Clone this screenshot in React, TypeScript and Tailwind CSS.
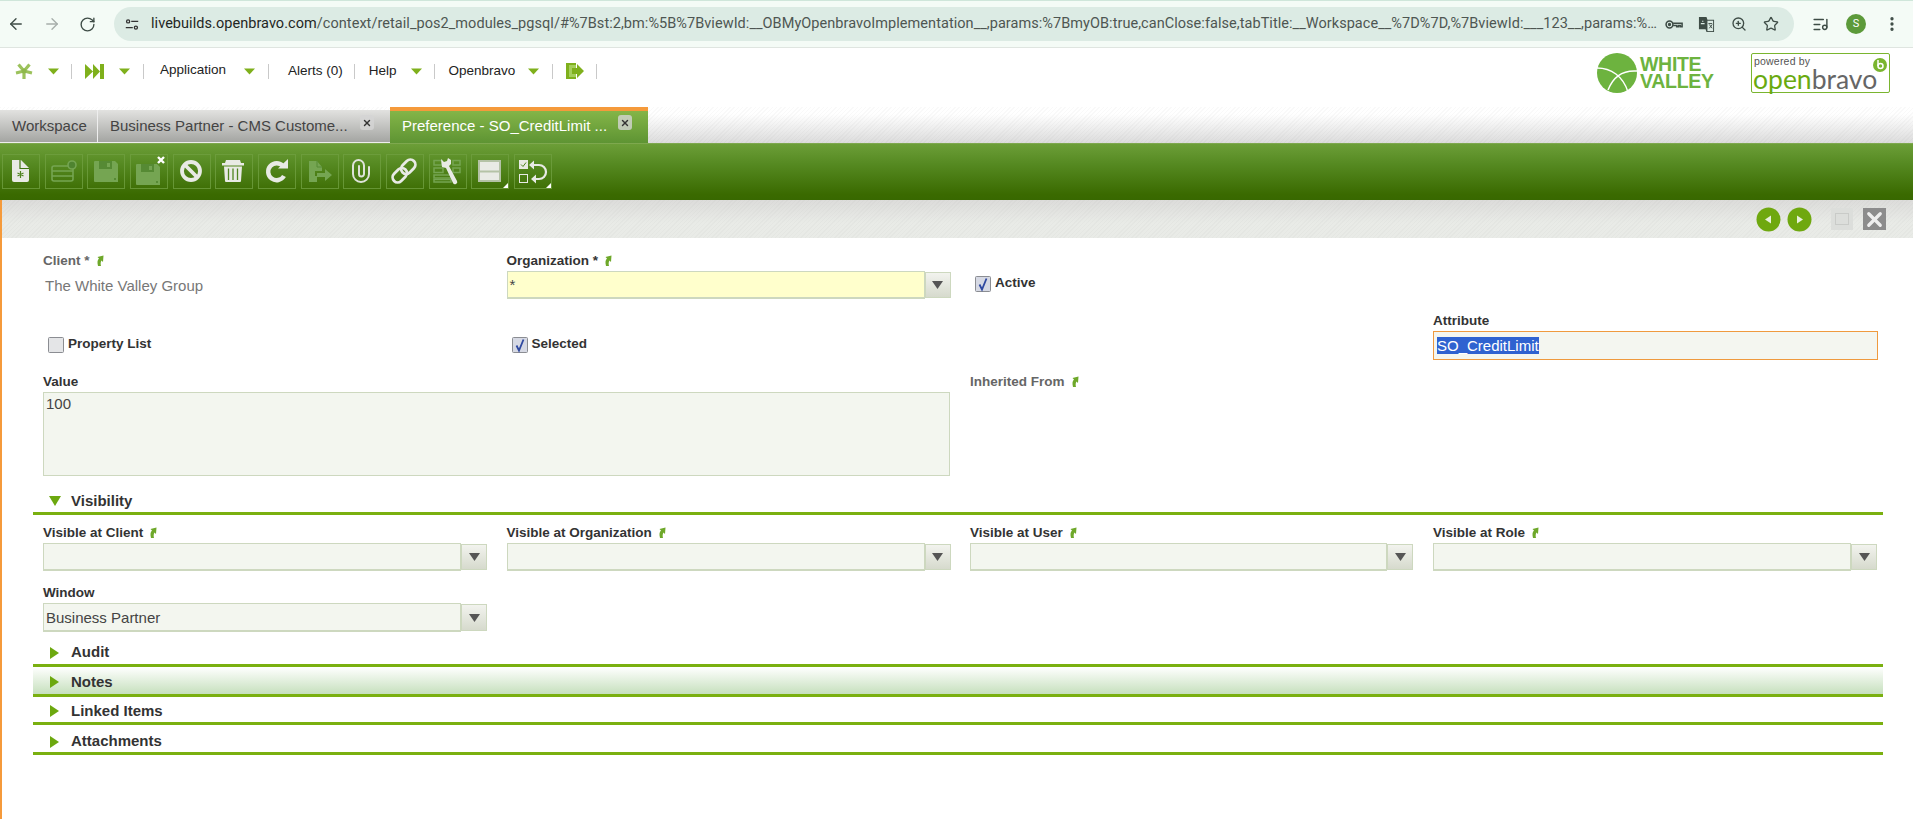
import React from "react";
import { ArrowLeft, ArrowRight, RotateCw, ZoomIn, Star, ListMusic, MoreVertical, X } from "lucide-react";

const W = "#e8eae5";
const D = "#75a552";

function Btn({ children, corner }: { children: React.ReactNode; corner?: boolean }) {
  return (
    <div className="relative w-[38px] h-[35px] border border-[#6f9f40]/80">
      <svg viewBox="1 1 36 33" className="w-[36px] h-[33px] block">{children}</svg>
      {corner && <span className="absolute right-0 bottom-0 w-0 h-0 border-l-[5px] border-l-transparent border-b-[5px] border-b-white" />}
    </div>
  );
}

function Floppy() {
  return (
    <>
      <path d="M8 7h20l3 3v18H8a1 1 0 0 1-1-1V8a1 1 0 0 1 1-1z" fill={D} />
      <rect x="12" y="7" width="13" height="8" fill="#568a34" />
      <rect x="20" y="9" width="3" height="4" fill={D} />
      <rect x="27" y="24" width="2" height="2" fill="#568a34" />
    </>
  );
}

function Toolbar() {
  return (
    <div className="h-[57px] flex gap-[4.67px] pl-[2px] pt-[10px] border-t border-[#7ea84e] bg-[linear-gradient(to_bottom,#6c9e38_0%,#568a22_35%,#3a6a00_90%,#386800_100%)]">
      <Btn>
        <path d="M10 6h9l8 8v12a2 2 0 0 1-2 2H12a2 2 0 0 1-2-2z" fill={W} />
        <path d="M18 6v8.500h9" fill="none" stroke="#3f7310" strokeWidth="1.200" />
        <path d="M18.500 17v7M15.500 19l6 3M21.500 19l-6 3" stroke="#4f8420" strokeWidth="1.200" />
      </Btn>
      <Btn>
        <rect x="7" y="12" width="21" height="15" rx="2" fill="none" stroke={D} strokeWidth="1.600" />
        <path d="M7 17h21M7 22h21" stroke={D} strokeWidth="1.600" />
        <circle cx="27" cy="11" r="4" fill="#4f8430" stroke={D} strokeWidth="1.600" />
      </Btn>
      <Btn><Floppy /></Btn>
      <Btn>
        <g transform="translate(-1 3)"><Floppy /></g>
        <path d="M28 3l6 6M34 3l-6 6" stroke="#fff" strokeWidth="2.400" />
      </Btn>
      <Btn>
        <circle cx="18" cy="17" r="9" fill="none" stroke={W} strokeWidth="3.800" />
        <path d="M12 11l12 12" stroke={W} strokeWidth="3.800" />
      </Btn>
      <Btn>
        <path d="M7 9h3l1-3h14l1 3h3v2.500H7z" fill={W} />
        <path d="M9 12.500h18L26 27a1 1 0 0 1-1 1H11a1 1 0 0 1-1-1z" fill={W} />
        <path d="M13.500 14.500v11.500M18 14.500v11.500M22.500 14.500v11.500" stroke="#4f8420" strokeWidth="1.300" />
      </Btn>
      <Btn>
        <path d="M26 22a8.500 8.500 0 1 1-1-10" fill="none" stroke={W} strokeWidth="4.400" />
        <path d="M20 14.500h10V5z" fill={W} />
      </Btn>
      <Btn>
        <path d="M8 7h8l5 6v4h-7v5h2v6H8z" fill={D} />
        <path d="M16 7v6h5" fill="none" stroke="#568a34" />
        <path d="M16 19h8v-4l7 6-7 6v-4h-8z" fill={D} />
      </Btn>
      <Btn>
        <path d="M26 13v7a8 8 0 0 1-16 0V11.500a5.500 5.500 0 0 1 11 0V20a2.500 2.500 0 0 1-5 0V12" fill="none" stroke="#dfe3da" strokeWidth="2" strokeLinecap="round" />
      </Btn>
      <Btn>
        <g transform="rotate(-45 18 17)" fill="none" stroke={W} strokeWidth="2.800">
          <rect x="4" y="12" width="16" height="10" rx="5" />
          <rect x="16" y="12" width="16" height="10" rx="5" />
        </g>
      </Btn>
      <Btn>
        <g fill="none" stroke={D} strokeWidth="1.500">
          <rect x="5" y="6.500" width="8" height="4.500" /><rect x="24" y="6.500" width="7" height="4.500" />
          <rect x="5" y="14" width="9" height="4.500" /><rect x="24" y="14" width="7" height="4.500" />
          <rect x="5" y="21" width="17" height="3" /><rect x="5" y="25.500" width="17" height="2.500" />
        </g>
        <path d="M12 5l3 3 3-1 1-3 3 2v4l-2 2 8 15a2.200 2.200 0 0 1-4 2L17 14l-4-1z" fill={W} />
      </Btn>
      <Btn corner>
        <rect x="7" y="6" width="23" height="22" fill="#b4c2a6" />
        <rect x="9" y="8" width="19" height="8.500" fill={W} />
        <rect x="9" y="18.500" width="19" height="7.500" fill={W} />
      </Btn>
      <Btn corner>
        <rect x="5" y="6" width="9" height="9" fill={W} />
        <path d="M7 10.500l2 2 3-4" stroke="#4f8420" fill="none" />
        <rect x="5.500" y="20.500" width="8" height="8" fill="none" stroke={W} />
        <path d="M18 11h7a6.500 6.500 0 0 1 0 14h-4" fill="none" stroke={W} strokeWidth="2.200" />
        <path d="M20 6.500l-5 4.500 5 4.500zM22 20.500l-5 4.500 5 4.500z" fill={W} />
      </Btn>
    </div>
  );
}

function Caret({ className = "" }: { className?: string }) {
  return (
    <svg viewBox="0 0 11 7" className={"w-[11px] h-[7px] " + className}>
      <path d="M0 0.500h11L5.500 6.500z" fill="#7fb01c" />
    </svg>
  );
}

function Sep({ className = "" }: { className?: string }) {
  return <span className={"w-px h-[15px] bg-[#c9c9c9] " + className} />;
}

function Header() {
  return (
    <div className="h-[59px] bg-white flex relative">
      <div className="flex items-center h-[46px] text-[13.5px] text-[#222] pl-[15px] w-[620px]">
        <svg viewBox="0 0 18 18" className="w-[18px] h-[18px]">
          <g stroke="#9cc25c" strokeWidth="3.200">
            <path d="M9 9L3.500 2.500M9 9l5.500-6.500M9 9l8 2M9 9l-8 2M9 9v8" />
          </g>
          <circle cx="9" cy="9" r="2.500" fill="#8eb84a" />
        </svg>
        <Caret className="ml-[15px]" />
        <Sep className="ml-[12px]" />
        <svg viewBox="0 0 20 15" className="w-[20px] h-[15px] ml-[13px]">
          <path d="M0 0l8 7.500L0 15zM8 0l7 7.500L8 15z" fill="#7fb01c" />
          <rect x="15" y="0" width="4" height="15" fill="#7fb01c" />
        </svg>
        <Caret className="ml-[14px]" />
        <Sep className="ml-[13px]" />
        <span className="ml-[16px] -mt-[2px]">Application</span>
        <Caret className="ml-[18px]" />
        <Sep className="ml-[13px]" />
        <span className="ml-[19px]">Alerts (0)</span>
        <Sep className="ml-[11px]" />
        <span className="ml-[14px]">Help</span>
        <Caret className="ml-[14px]" />
        <Sep className="ml-[12px]" />
        <span className="ml-[14px]">Openbravo</span>
        <Caret className="ml-[13px]" />
        <Sep className="ml-[13px]" />
        <svg viewBox="0 0 18 16" className="w-[18px] h-[16px] ml-[13px]">
          <path d="M0 0h10v2H3v12h7v2H0z" fill="#7fb01c" />
          <path d="M3 2h7v3H6v6h4v3H3z" fill="#a5cf5c" />
          <path d="M6 5h5V1l7 7-7 7v-4H6z" fill="#7fb01c" />
        </svg>
        <Sep className="ml-[12px]" />
      </div>
      <div className="ml-auto flex pt-[5px] pr-[23px]">
        <svg viewBox="0 0 40 40" className="w-[40px] h-[40px]">
          <circle cx="20" cy="20" r="20" fill="#6db33f" />
          <path d="M0 15c14 0 26 8 31 24M11 37c5-13 15-20 29-19" fill="none" stroke="#fff" strokeWidth="1.500" />
        </svg>
        <div className="ml-[3px] font-['Liberation_Sans'] font-bold text-[19.500px] leading-[17px] text-[#6db33f] tracking-[-0.3px] pt-[3px] w-[111px]">
          <div>WHITE</div>
          <div>VALLEY</div>
        </div>
        <div className="relative w-[139px] h-[40px] border border-[#7ab52f] rounded-[2px]">
          <div className="font-['Liberation_Sans'] text-[10.5px] leading-[11px] text-[#555] pl-[2px] pt-[2px] tracking-[0.2px]">powered by</div>
          <div className="font-['Lato'] text-[26.500px] leading-[25px] pl-[1px] whitespace-nowrap">
            <span className="text-[#6aaa10]">open</span><span className="text-[#666]">bravo</span>
          </div>
          <svg viewBox="0 0 14 14" className="absolute right-[2px] top-[4px] w-[14px] h-[14px]">
            <circle cx="7" cy="7" r="7" fill="#7ab52f" />
            <circle cx="7.500" cy="8" r="2.500" fill="none" stroke="#fff" strokeWidth="1.500" />
            <path d="M5 8V2" stroke="#fff" strokeWidth="1.500" />
          </svg>
        </div>
      </div>
    </div>
  );
}

function TabClose({ className = "" }: { className?: string }) {
  return (
    <span className={"flex items-center justify-center w-[14px] h-[15px] rounded-[3px] bg-[#d5d5d5]/80 " + className}>
      <X size={10} strokeWidth={3.4} className="text-[#333]" />
    </span>
  );
}

function Tabs() {
  return (
    <div className="h-[36px] flex items-end text-[15px] [background:repeating-linear-gradient(135deg,rgba(0,0,0,0.025)_0_1px,transparent_1px_3px),linear-gradient(to_bottom,#ffffff_0%,#ffffff_20%,#dcdcdc_100%)]">
      <div className="w-[98px] h-[33px] pl-[12px] pt-[5px] border-r border-b border-[#eee] text-[#444] bg-[linear-gradient(to_bottom,#e2e2e0,#a4a5a2)]">Workspace</div>
      <div className="w-[292px] h-[33px] pl-[12px] pt-[5px] border-b border-[#eee] flex text-[#444] bg-[linear-gradient(to_bottom,#e2e2e0,#a4a5a2)]">
        <span>Business Partner - CMS Custome...</span>
        <TabClose className="ml-[12px]" />
      </div>
      <div className="w-[258px] h-[36px] pl-[12px] flex border-t-4 border-[#f59a3b] text-white bg-[linear-gradient(to_bottom,#84b548,#5e9433)] pt-[4px]">
        <span>Preference - SO_CreditLimit ...</span>
        <TabClose className="ml-[11px]" />
      </div>
    </div>
  );
}

function Pin() {
  return (
    <svg viewBox="0 0 8 11" className="inline-block w-[8px] h-[11px] ml-[6px] align-[-1px]">
      <path d="M2 11C1 7 1.500 5 3 3.500L1.500 2 7.500 0.500 7 7 5.500 5.500C4.500 7 4.500 9 5 11z" fill="#6ea82a" />
    </svg>
  );
}

function Label({ children, pin, muted }: { children: React.ReactNode; pin?: boolean; muted?: boolean }) {
  return (
    <div className={"h-[16px] pt-[1px] leading-[16px] text-[13.5px] font-bold whitespace-nowrap " + (muted ? "text-[#666]" : "text-[#333]")}>
      {children}
      {pin && <Pin />}
    </div>
  );
}

function Combo({ value, yellow, tall, w = "w-[418px]" }: { value?: string; yellow?: boolean; tall?: boolean; w?: string }) {
  return (
    <div className={"flex items-center mt-[3px] " + (tall ? "h-[29px]" : "h-[28px]")}>
      <div className={w + " h-full border border-[#cdd8bf] border-b-2 pl-[2px] pt-[2px] text-[15px] text-[#444] flex items-center " + (yellow ? "bg-[#ffffcc]" : "bg-[#f3f6ef]")}>{value}</div>
      <div className={"w-[26px] flex items-center justify-center border border-[#cdd8bf] bg-[linear-gradient(to_bottom,#f2f3ee,#d6dacd)] " + (tall ? "h-[27px]" : "h-[26px]")}>
        <svg viewBox="0 0 11 8" className="w-[11px] h-[8px]"><path d="M0 0h11L5.500 8z" fill="#555" /></svg>
      </div>
    </div>
  );
}

function Check({ on }: { on?: boolean }) {
  return (
    <svg viewBox="0 0 16 16" className="w-[16px] h-[16px] shrink-0">
      <rect x="0.500" y="0.500" width="15" height="15" rx="1" fill={on ? "#d6d9e4" : "#e4e5e7"} stroke="#8b8d92" />
      {on && <path d="M4.500 8.500l2.500 5L11.500 2.500" fill="none" stroke="#2f49a0" strokeWidth="1.800" />}
    </svg>
  );
}

function CheckField({ label, on, className = "" }: { label: string; on?: boolean; className?: string }) {
  return (
    <div className={"flex items-center h-[16px] gap-[4px] text-[13.5px] font-bold text-[#333] ml-[5px] " + className}>
      <Check on={on} />
      <span className="-mt-[2px]">{label}</span>
    </div>
  );
}

function Section({ title, open, h, pt, hi }: { title: string; open?: boolean; h: string; pt: string; hi?: boolean }) {
  return (
    <div className={h + " " + pt + " ml-[31px] w-[1850px] border-b-[3px] border-[#7ab010] flex items-center pl-[16px] " + (hi ? "bg-[linear-gradient(to_bottom,#ffffff,#c6e0bd)]" : "")}>
      <svg viewBox="0 0 12 12" className="w-[12px] h-[12px]">
        {open ? <path d="M0 1h12L6 11z" fill="#6ca80f" /> : <path d="M1 0l9 6-9 6z" fill="#6ca80f" />}
      </svg>
      <span className="ml-[10px] text-[15px] font-bold text-[#333]">{title}</span>
    </div>
  );
}

const cols = "grid grid-cols-[463.5px_463.5px_463px_1fr] pl-[41px]";

function Form() {
  return (
    <div className="flex-1 border-l-2 border-[#f59a3b] bg-white">
      <div className="h-[38px] flex items-center justify-end pr-[27px] [background:repeating-linear-gradient(135deg,rgba(0,0,0,0.02)_0_1px,transparent_1px_3px),linear-gradient(to_bottom,#dcdcda,#e9ebe7_60%)]">
        <svg viewBox="0 0 25 25" className="w-[25px] h-[25px]">
          <circle cx="12.500" cy="12.500" r="12" fill="#6fa80f" />
          <path d="M15 8.500v8l-6-4z" fill="#e8f0dc" />
        </svg>
        <svg viewBox="0 0 25 25" className="w-[25px] h-[25px] ml-[6px]">
          <circle cx="12.500" cy="12.500" r="12" fill="#6fa80f" />
          <path d="M10 8.500v8l6-4z" fill="#e8f0dc" />
        </svg>
        <div className="w-[22px] h-[22px] ml-[19px] bg-[#dcdedb] flex items-center justify-center">
          <div className="w-[14px] h-[12px] border border-[#c9cbc8]" />
        </div>
        <div className="w-[23px] h-[22px] ml-[10px] bg-[#8c8c8c] flex items-center justify-center">
          <X size={23} strokeWidth={3.4} className="text-[#eee]" />
        </div>
      </div>

      <div className={cols + " mt-[14px]"}>
        <div>
          <Label pin muted>Client *</Label>
          <div className="h-[28px] mt-[3px] pl-[2px] pt-[2px] flex items-center text-[15px] text-[#777]">The White Valley Group</div>
        </div>
        <div>
          <Label pin>Organization *</Label>
          <Combo value="*" yellow />
        </div>
        <CheckField label="Active" on className="mt-[24px]" />
      </div>

      <div className={cols + " mt-[13px]"}>
        <CheckField label="Property List" className="mt-[25px]" />
        <CheckField label="Selected" on className="mt-[25px]" />
        <div />
        <div>
          <Label>Attribute</Label>
          <div className="w-[445px] h-[29px] mt-[3px] pl-[3px] border border-[#ef9a3e] bg-[#f4f6f0] flex items-center text-[15px]">
            <span className="bg-[#2f62d0] text-white leading-[17px]">SO_CreditLimit</span>
          </div>
        </div>
      </div>

      <div className={cols + " mt-[13px]"}>
        <div className="col-span-2">
          <Label>Value</Label>
          <div className="w-[907px] h-[84px] mt-[3px] pl-[2px] border border-[#cdd8bf] bg-[#f3f6ef] text-[15px] text-[#444]">100</div>
        </div>
        <Label pin muted>Inherited From</Label>
      </div>

      <Section title="Visibility" open h="h-[28px] mt-[11px]" pt="pt-[3px]" />

      <div className={cols + " mt-[9px]"}>
        <div><Label pin>Visible at Client</Label><Combo /></div>
        <div><Label pin>Visible at Organization</Label><Combo /></div>
        <div><Label pin>Visible at User</Label><Combo w="w-[417px]" /></div>
        <div><Label pin>Visible at Role</Label><Combo /></div>
      </div>

      <div className={cols + " mt-[13px]"}>
        <div><Label>Window</Label><Combo value="Business Partner" tall /></div>
      </div>

      <Section title="Audit" h="h-[31px] mt-[4px]" pt="pt-[5px]" />
      <Section title="Notes" h="h-[30px]" pt="pt-[3px]" hi />
      <Section title="Linked Items" h="h-[28px]" pt="pt-[3px]" />
      <Section title="Attachments" h="h-[30px]" pt="pt-[6px]" />
    </div>
  );
}

function Chrome() {
  return (
    <div className="h-[48px] border-t border-[#cfe6da] border-b border-b-[#dfe5e0] bg-[#f4fbf6] flex items-center relative">
      <ArrowLeft size={18} strokeWidth={1.8} className="ml-[7px] text-[#3e4c46]" />
      <ArrowRight size={18} strokeWidth={1.8} className="ml-[18px] text-[#a6aeaa]" />
      <RotateCw size={17} strokeWidth={1.9} className="ml-[18px] text-[#3e4c46]" />
      <div className="ml-[18px] w-[1680px] h-[34px] rounded-full bg-[#dcebe4] flex items-center">
        <svg viewBox="0 0 18 14" className="ml-[11px] w-[14px] h-[13px]" fill="none" stroke="#333" strokeWidth="1.700">
          <circle cx="4" cy="3" r="2" /><path d="M8 3h9M1 11h9" /><circle cx="14" cy="11" r="2" />
        </svg>
        <div className="ml-[12px] w-[1510px] whitespace-nowrap overflow-hidden font-['Roboto'] text-[14.500px] tracking-[0.05px] text-[#4e5652]">
          <span className="text-[#1f2623]">livebuilds.openbravo.com</span>/context/retail_pos2_modules_pgsql/#%7Bst:2,bm:%5B%7BviewId:__OBMyOpenbravoImplementation__,params:%7BmyOB:true,canClose:false,tabTitle:__Workspace__%7D%7D,%7BviewId:___123__,params:%…
        </div>
        <svg viewBox="0 0 20 12" className="ml-[4px] w-[18px] h-[11px]" fill="none" stroke="#3e4c46" strokeWidth="1.700">
          <circle cx="5" cy="6" r="3.800" /><circle cx="5" cy="6" r="1" fill="#3e4c46" />
          <path d="M9 4.500h10v4h-2v-1.500h-2v1.500h-2v-1.500H9" />
        </svg>
        <svg viewBox="0 0 18 18" className="ml-[15px] w-[17px] h-[17px]">
          <path d="M1 1h8l1 3h7v13H9l-1-3H1z" fill="#3e4c46" />
          <rect x="10" y="5" width="6" height="11" fill="#dcebe4" />
          <path d="M3 8h4M5 5v1" stroke="#dcebe4" strokeWidth="1.400" />
          <path d="M11 8h4M12 13l3-4M12 9l3 4" stroke="#3e4c46" strokeWidth="1" />
        </svg>
        <ZoomIn size={16} strokeWidth={2} className="ml-[16px] text-[#3e4c46]" />
        <Star size={16} strokeWidth={1.9} className="ml-[16px] text-[#3e4c46]" />
      </div>
      <ListMusic size={17} strokeWidth={2} className="ml-[18px] text-[#3e4c46]" />
      <div className="ml-[17px] w-[20px] h-[20px] rounded-full bg-[#5c9a3a] text-white text-[11px] font-['Roboto'] flex items-center justify-center">S</div>
      <MoreVertical size={18} strokeWidth={2.4} className="ml-[17px] text-[#3e4c46]" />
    </div>
  );
}

export default function App() {
  return (
    <div className="w-[1913px] h-[819px] overflow-hidden flex flex-col bg-white font-['Liberation_Sans',Arial,sans-serif]">
      <Chrome />
      <Header />
      <Tabs />
      <Toolbar />
      <Form />
    </div>
  );
}
